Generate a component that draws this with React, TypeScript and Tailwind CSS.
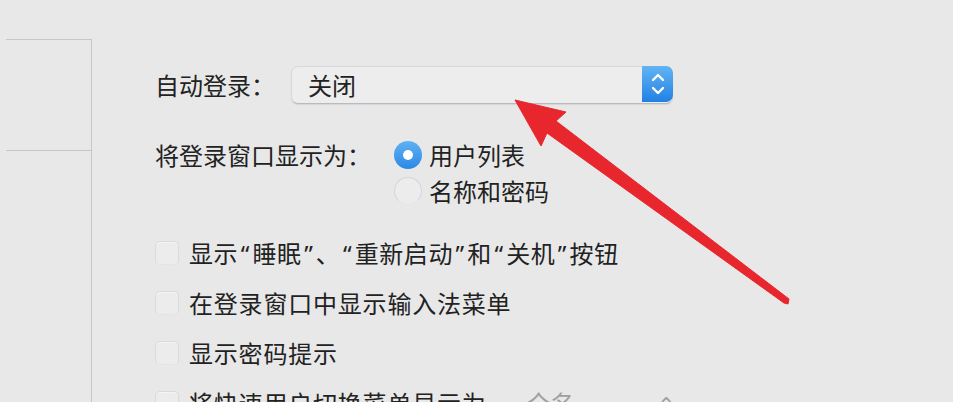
import React from "react";

const font = { fontFamily: '"Noto Sans CJK SC", "Noto Sans", sans-serif' };

function Checkbox() {
  return (
    <div className="w-[24px] h-[24px] shrink-0 rounded-[5px] bg-[#ececec] border border-[#dadada] border-b-[#e4e4e4] shadow-[inset_0_1px_0_#f4f4f4]" />
  );
}

function Q({ c }: { c: string }) {
  return <span className="font-['Noto_Sans',sans-serif] mx-[2.5px]">{c}</span>;
}

export default function App() {
  return (
    <div
      className="relative w-[953px] h-[402px] overflow-hidden bg-[#e8e8e8] flex text-[#222222]"
      style={font}
    >
      {/* left sidebar frame */}
      <div className="w-[92px] shrink-0 pl-[6px] pt-[39px]">
        <div className="h-full border-t border-r border-[#c6c6cf]">
          <div className="h-[111px] border-b border-[#c6c6cf]" />
        </div>
      </div>

      {/* main content */}
      <div className="pl-[63px] pt-[66px] flex flex-col">
        {/* auto login */}
        <div className="flex items-center h-[38px]">
          <div className="w-[136px] text-[24px] leading-none">自动登录：</div>
          <div className="w-[382px] h-[38px] flex rounded-[7px] bg-[#ededed] border border-[#d8d8dc] border-b-[#b9b9c2] shadow-[0_1px_1px_rgba(0,0,0,0.08)]">
            <div className="flex-1 flex items-center pl-[16px] text-[24px] leading-none">关闭</div>
            <div className="w-[31px] h-full -my-px -mr-px rounded-r-[7px] bg-gradient-to-b from-[#62b4f2] to-[#1f80e4] flex items-center justify-center">
              <svg width="16" height="26" viewBox="0 0 16 26" fill="none" stroke="white" strokeWidth="2.4" strokeLinecap="round" strokeLinejoin="round">
                <path d="M3 9 L8 4 L13 9" />
                <path d="M3 17 L8 22 L13 17" />
              </svg>
            </div>
          </div>
        </div>

        {/* login window display */}
        <div className="flex mt-[33px]">
          <div className="w-[239px] h-[36px] flex items-center text-[24px] leading-none">将登录窗口显示为：</div>
          <div className="flex flex-col">
            <div className="h-[36px] flex items-center gap-[7px]">
              <div className="w-[28px] h-[28px] rounded-full bg-gradient-to-b from-[#5fb2f1] to-[#2a88e5] flex items-center justify-center">
                <div className="w-[10px] h-[10px] rounded-full bg-white" />
              </div>
              <span className="text-[24px] leading-none">用户列表</span>
            </div>
            <div className="h-[36px] flex items-center gap-[7px]">
              <div className="w-[28px] h-[28px] rounded-full bg-[#ececec] border border-[#d6d6d9] border-b-[#e6e6e6]" />
              <span className="text-[24px] leading-none">名称和密码</span>
            </div>
          </div>
        </div>

        {/* checkboxes */}
        <div className="flex flex-col mt-[19px]">
          <div className="h-[50px] flex items-center gap-[10px]">
            <Checkbox />
            <span className="text-[24px] leading-none tracking-[0.6px]">
              显示<Q c="“" />睡眠<Q c="”" />、<Q c="“" />重新启动<Q c="”" />和<Q c="“" />关机<Q c="”" />按钮
            </span>
          </div>
          <div className="h-[50px] flex items-center gap-[10px]">
            <Checkbox />
            <span className="text-[24px] leading-none tracking-[0.8px]">在登录窗口中显示输入法菜单</span>
          </div>
          <div className="h-[50px] flex items-center gap-[10px]">
            <Checkbox />
            <span className="text-[24px] leading-none tracking-[0.8px]">显示密码提示</span>
          </div>
          <div className="h-[50px] flex items-center gap-[10px]">
            <Checkbox />
            <span className="text-[24px] leading-none tracking-[0.8px]">将快速用户切换菜单显示为</span>
            <span className="ml-[30px] text-[24px] leading-none text-[#a0a0a0]">全名</span>
            <span className="ml-[72px] text-[22px] leading-none text-[#a0a0a0]">⌃</span>
          </div>
        </div>
      </div>

      {/* red annotation arrow */}
      <svg className="absolute inset-0 pointer-events-none" width="953" height="402" viewBox="0 0 953 402">
        <polygon
          points="515,100 566,112 556,121 789,299 788,304 784,303 547,133 541,146"
          fill="#e8262d"
          stroke="#e8262d"
          strokeWidth="1"
          strokeLinejoin="round"
        />
      </svg>
    </div>
  );
}
